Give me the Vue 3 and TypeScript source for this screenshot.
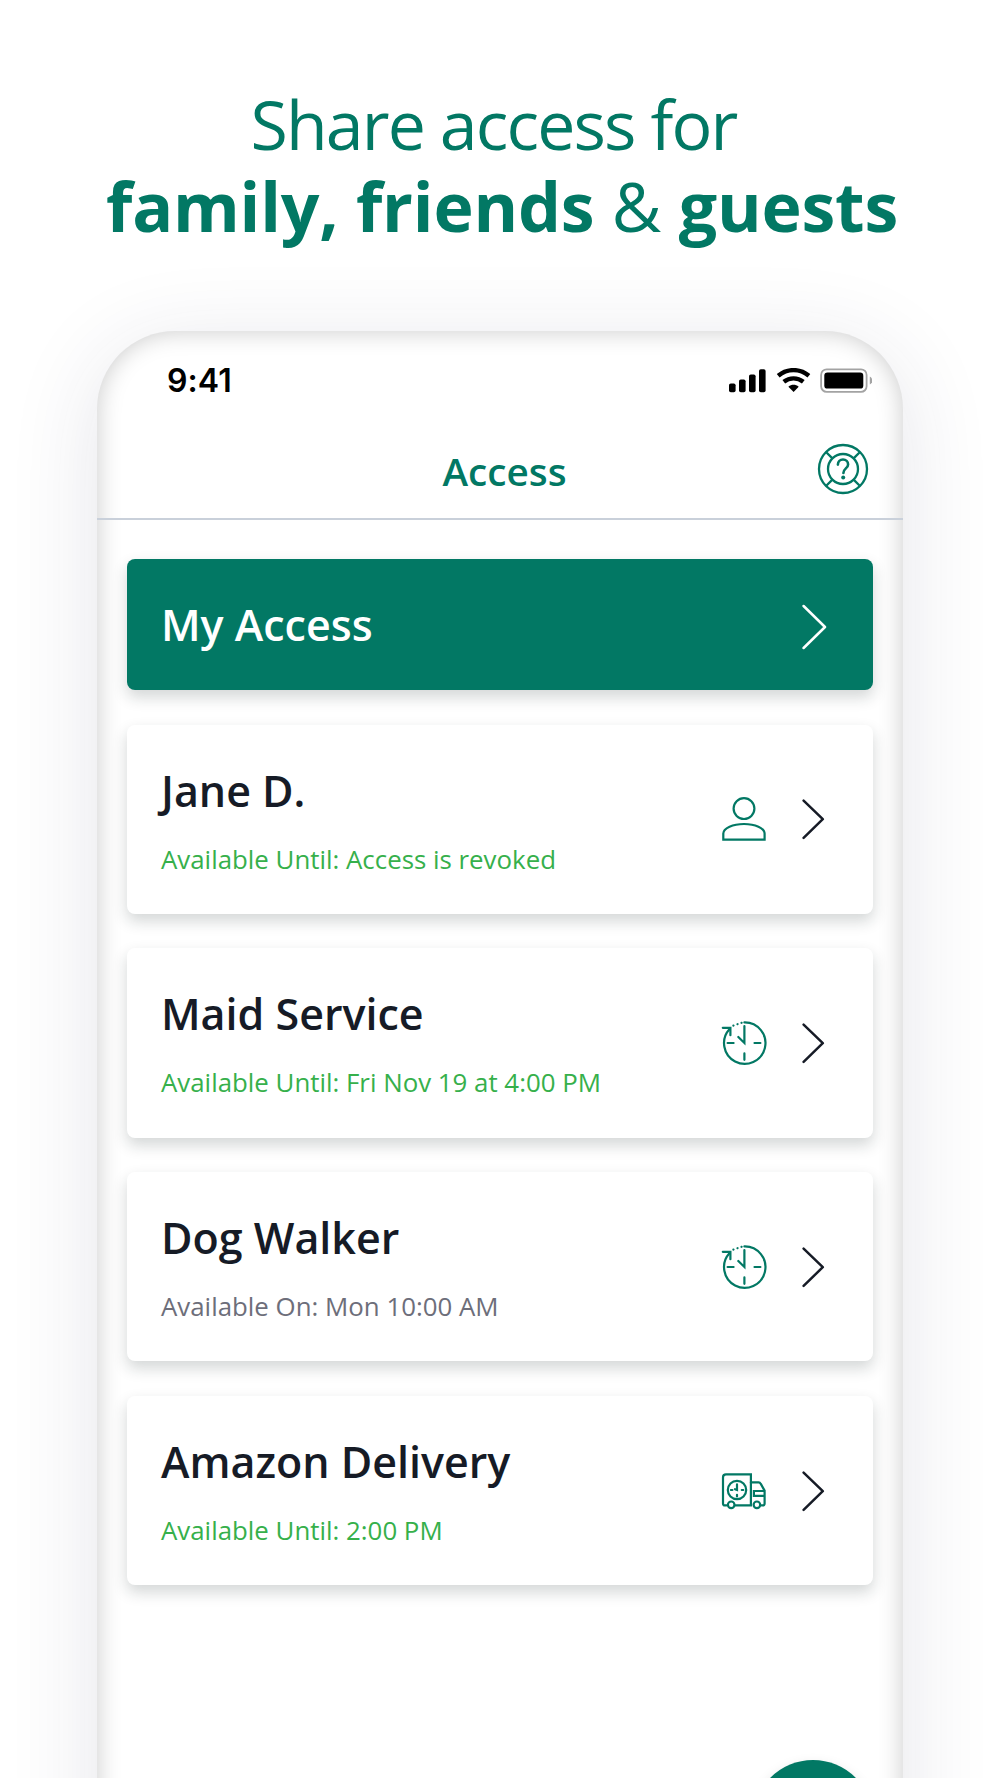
<template>
    <main class="page">
        <h1 class="headline">
            <span class="line first">Share access for</span>
            <span class="line second"><b>family, friends</b> &amp; <b>guests</b></span>
        </h1>
        <section class="phone">
            <div class="statusBar">
                <span class="time">9:41</span>
                <svg class="statusIcons" viewBox="0 0 144 26" width="144" height="26">
                    <rect x="1" y="15.5" width="6.6" height="8.8" rx="1.8" />
                    <rect x="11" y="11.4" width="6.6" height="12.9" rx="1.8" />
                    <rect x="21" y="6.4" width="6.6" height="17.9" rx="1.8" />
                    <rect x="31" y="1.2" width="6.6" height="23.1" rx="1.8" />
                    <g class="wifi">
                        <path d="M50.2 7.8C59.3 0.2 71.8 0.2 80.9 7.8" />
                        <path d="M55.8 13.8C61.6 9.2 69.5 9.2 75.3 13.8" />
                    </g>
                    <path d="M60.4 18.8C63.6 16.2 67.5 16.2 70.7 18.8L65.6 24.1Z" />
                    <rect class="batteryShell" x="93.1" y="1.3" width="45.5" height="22.6" rx="5.6" />
                    <rect x="96.3" y="4.5" width="39" height="16.1" rx="3.2" />
                    <path class="batteryTip" d="M141.8 8.6C145.2 10.2 145.2 15 141.8 16.6Z" />
                </svg>
            </div>
            <header class="topBar">
                <h2>Access</h2>
                <svg class="help" viewBox="0 0 52 52" width="52" height="52">
                    <circle cx="26" cy="26" r="24" />
                    <circle cx="26" cy="26" r="15" />
                    <path d="M9 9L15.4 15.4M43 9L36.6 15.4M9 43L15.4 36.6M43 43L36.6 36.6" />
                    <path class="question" d="M20.9 21.6C20.9 18.4 23.1 16.5 26 16.5S31.1 18.5 31.1 21.4C31.1 25.4 26.4 25.4 26.4 30" />
                    <circle class="dot" cx="26.2" cy="34.4" r="2" />
                </svg>
            </header>
            <div class="list">
                <article class="card mine" @click="select('My Access')">
                    <h3>My Access</h3>
                    <svg class="chevron" viewBox="0 0 26 46" width="26" height="46">
                        <path d="M1.6 2L23 23L1.6 44" />
                    </svg>
                </article>
                <article
                    v-for="guest in guests"
                    :key="guest.name"
                    class="card"
                    @click="select(guest.name)"
                >
                    <div class="info">
                        <h3>{{ guest.name }}</h3>
                        <p :class="{ active: guest.active }">{{ guest.status }}</p>
                    </div>
                    <svg class="kind" viewBox="0 0 46 46" width="46" height="46">
                        <g v-if="guest.icon === 'person'">
                            <circle cx="23" cy="12.6" r="10.4" />
                            <path d="M2.3 43.6V37.6C2.3 31.9 12 28 23 28S43.6 31.9 43.6 37.6V43.6Z" />
                        </g>
                        <g v-else-if="guest.icon === 'clock'">
                            <path d="M23.4 2.4A20.7 20.7 0 1 1 8.4 9.2" />
                            <path d="M1.8 7.8H9.4V15.2" />
                            <path class="dots" d="M12.4 5.6L22 2.3" />
                            <path d="M23.4 6V23L17.3 17M6.6 23H12.6M33.5 23H39.4M23.4 33.4V39.8" />
                        </g>
                        <g v-else>
                            <path d="M5.4 37.4H4Q2 37.4 2 35.4V9.4Q2 6.4 5 6.4H29.9V37.4H14.5" />
                            <path d="M29.9 14.4H37.6Q39 14.4 39.8 15.9L43.6 22.6V35.4Q43.6 37.4 41.6 37.4H40.6M43.6 23H32.9V27.8H43.6" />
                            <circle cx="10.2" cy="36.8" r="3.3" />
                            <circle cx="35.9" cy="36.8" r="3.3" />
                            <circle cx="16" cy="22" r="9.2" />
                            <path d="M16 16.4V22L14 21.2M9.9 22H11.4M20.8 22H22.3M16 26.8V28.4" />
                        </g>
                    </svg>
                    <svg class="chevron" viewBox="0 0 26 46" width="26" height="46">
                        <path d="M1.6 4.6L20.8 23.2L1.6 41.8" />
                    </svg>
                </article>
            </div>
            <button class="add" aria-label="Add"></button>
        </section>
    </main>
</template>

<script setup lang="ts">
import { ref } from 'vue';

interface Guest {
    name: string
    status: string
    active: boolean
    icon: 'person' | 'clock' | 'truck'
}

const guests: Guest[] = [
    { name: 'Jane D.', status: 'Available Until: Access is revoked', active: true, icon: 'person' },
    { name: 'Maid Service', status: 'Available Until: Fri Nov 19 at 4:00 PM', active: true, icon: 'clock' },
    { name: 'Dog Walker', status: 'Available On: Mon 10:00 AM', active: false, icon: 'clock' },
    { name: 'Amazon Delivery', status: 'Available Until: 2:00 PM', active: true, icon: 'truck' }
]

const selected = ref('')

function select(name: string) {
    selected.value = name
}
</script>

<style>
body {
    margin: 0;
    background: #fff;
}
</style>

<style scoped>
.page {
    height: 1778px;
    overflow: hidden;
    box-sizing: border-box;
    padding: 83px 97px 0;
    font-family: "Open Sans", "Noto Sans", sans-serif;
    color: #161b26;
}

h1,
h2,
h3,
p {
    margin: 0;
}

svg {
    display: block;
    flex-shrink: 0;
}

/* headline */
.headline {
    height: 248px;
    font-size: 68px;
    line-height: 82px;
    font-weight: 400;
    color: #027864;
    text-align: center;
}

.line {
    display: block;
    white-space: nowrap;
}

.first {
    letter-spacing: -1.85px;
    padding-right: 13px;
}

.second {
    padding-left: 4px;
    letter-spacing: -0.18px;
}

.second b {
    font-weight: 700;
}

/* phone */
.phone {
    position: relative;
    height: 1600px;
    border-radius: 78px 78px 0 0;
    background: #fff;
    box-shadow:
        inset 0 0 24px rgba(0, 0, 0, 0.21),
        0 16px 90px rgba(40, 40, 80, 0.12);
}

.statusBar {
    display: flex;
    align-items: center;
    justify-content: space-between;
    height: 99px;
    padding: 0 31px 0 70px;
}

.time {
    font: 600 32px/40px Inter, sans-serif;
    letter-spacing: 0.1px;
    color: #000;
}

.wifi path {
    fill: none;
    stroke: #000;
    stroke-width: 4.4;
}

.batteryShell {
    fill: none;
    stroke: #a3a3a3;
    stroke-width: 1.8;
}

.batteryTip {
    fill: #a3a3a3;
}

.topBar {
    display: grid;
    grid-template-columns: 1fr auto 1fr;
    align-items: center;
    box-sizing: border-box;
    height: 90px;
    padding: 0 34px 7px 43px;
    border-bottom: 2px solid #c9d0da;
}

.topBar h2 {
    grid-column: 2;
    font-size: 38.7px;
    line-height: 52px;
    font-weight: 600;
    color: #027864;
}

.help {
    justify-self: end;
    margin-bottom: 4px;
    fill: none;
    stroke: #027864;
    stroke-width: 2.3;
}

.question {
    stroke-width: 2.6;
    stroke-linecap: round;
}

.dot {
    fill: #027864;
    stroke: none;
}

/* cards */
.list {
    display: flex;
    flex-direction: column;
    gap: 34.6px;
    padding: 39px 30px 0 29.5px;
}

.card {
    display: flex;
    align-items: center;
    box-sizing: border-box;
    height: 189.2px;
    padding: 0 45px 0 34.5px;
    border-radius: 8px;
    background: #fff;
    box-shadow: 0 7px 15px rgba(20, 35, 35, 0.19);
    cursor: pointer;
}

.card h3 {
    font-size: 43px;
    line-height: 58px;
    font-weight: 600;
}

.mine {
    justify-content: space-between;
    height: 131px;
    background: #027864;
    color: #fff;
}

.mine .chevron {
    margin-top: 5px;
    stroke: #fff;
}

.info {
    flex: 1;
}

.info p {
    margin-top: 21px;
    font-size: 25.85px;
    line-height: 36px;
    color: #6d6e7a;
}

.info .active {
    color: #36b04b;
}

.kind {
    fill: none;
    stroke: #027864;
    stroke-width: 2.2;
    stroke-linecap: round;
}

.dots {
    stroke-dasharray: 0.1 4.2;
}

.chevron {
    margin-left: 35px;
    fill: none;
    stroke: #161b26;
    stroke-width: 2.5;
    stroke-linecap: round;
    stroke-linejoin: round;
}

.add {
    position: absolute;
    top: 1428.5px;
    right: 30px;
    width: 120px;
    height: 120px;
    border: 0;
    border-radius: 50%;
    background: #027864;
    box-shadow: 0 6px 14px rgba(0, 0, 0, 0.15);
}
</style>
